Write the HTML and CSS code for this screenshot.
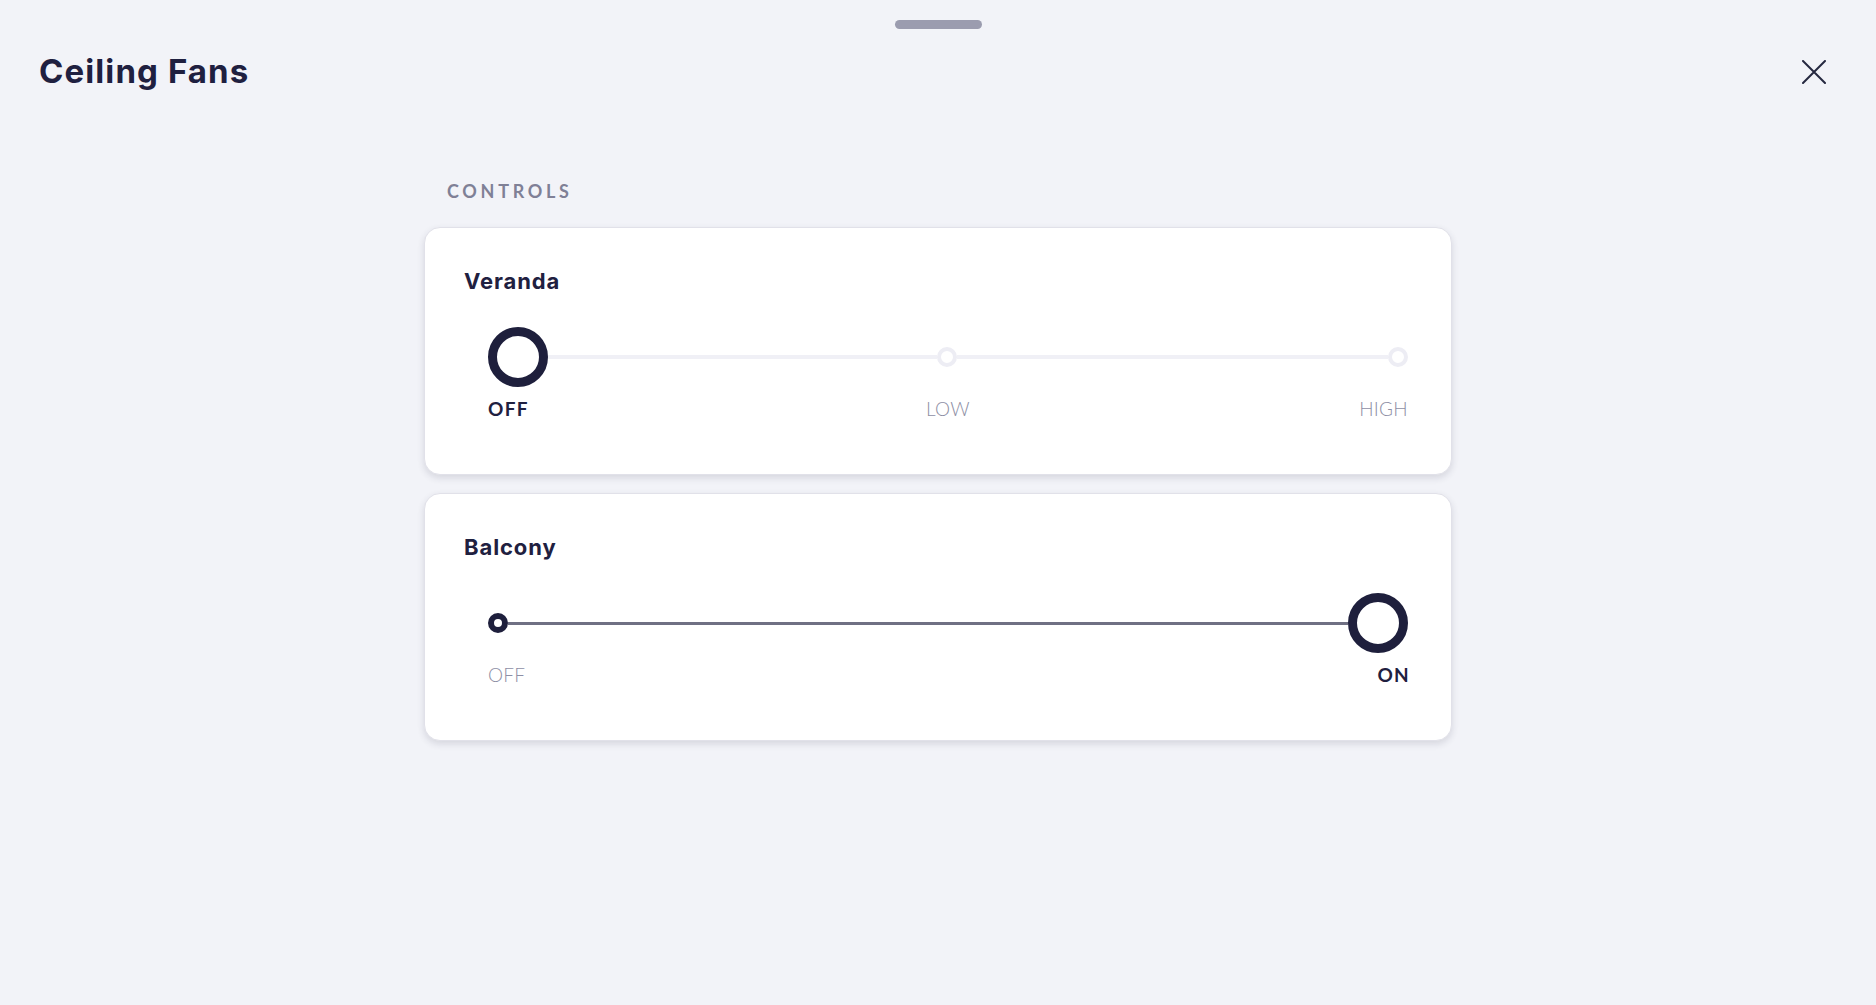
FILE: index.html
```html
<!DOCTYPE html>
<html lang="en">
<head>
<meta charset="utf-8">
<title>Ceiling Fans</title>
<link rel="stylesheet" href="styles.css">
</head>
<body>
  <div class="handle"></div>
  <header class="header">
    <h1 class="title">Ceiling Fans</h1>
    <button class="close" aria-label="Close">
      <svg width="24" height="24" viewBox="0 0 24 24" fill="none" stroke="#262840" stroke-width="2" stroke-linecap="round">
        <path d="M1 1 L23 23 M23 1 L1 23"/>
      </svg>
    </button>
  </header>

  <main class="content">
    <div class="section-label">CONTROLS</div>

    <section class="card">
      <h2 class="card-title">Veranda</h2>
      <div class="slider">
        <span class="knob big"></span>
        <span class="track light grow-a"></span>
        <span class="dot"></span>
        <span class="track light grow-b"></span>
        <span class="dot"></span>
      </div>
      <div class="labels three">
        <span class="lbl active start">OFF</span>
        <span class="lbl mid">LOW</span>
        <span class="lbl end">HIGH</span>
      </div>
    </section>

    <section class="card">
      <h2 class="card-title">Balcony</h2>
      <div class="slider">
        <span class="knob small"></span>
        <span class="track dark fill"></span>
        <span class="knob big"></span>
      </div>
      <div class="labels two">
        <span class="lbl">OFF</span>
        <span class="lbl active">ON</span>
      </div>
    </section>
  </main>
</body>
</html>
```

FILE: styles.css
```css
* { box-sizing: border-box; }

html, body {
  margin: 0;
  padding: 0;
  background: #f2f3f8;
  font-family: Lato, "Noto Sans", sans-serif;
  color: #1f2040;
}

body {
  width: 1876px;
  height: 1005px;
  overflow: hidden;
  padding-top: 20px;
}

.handle {
  width: 87px;
  height: 9px;
  margin: 0 auto;
  border-radius: 5px;
  background: #9b9caf;
}

.header {
  display: flex;
  align-items: center;
  justify-content: space-between;
  margin-top: 22px;
  padding: 0 50px 0 39px;
  height: 40px;
}

.title {
  margin: 0;
  font-family: Inter, Lato, sans-serif;
  font-size: 33px;
  line-height: 40px;
  font-weight: 700;
  letter-spacing: 1.1px;
  color: #1f2040;
}

.close {
  display: flex;
  padding: 0;
  margin-top: 2px;
  border: 0;
  background: transparent;
  cursor: pointer;
}

.content {
  width: 1028px;
  margin: 90px auto 0;
}

.section-label {
  padding-left: 23px;
  font-size: 18px;
  line-height: 20px;
  font-weight: 700;
  letter-spacing: 3.7px;
  color: #7f8096;
  margin-bottom: 26px;
}

.card {
  background: #ffffff;
  border: 1px solid #e1e1e9;
  border-radius: 16px;
  box-shadow: 0 3px 7px rgba(40, 40, 70, 0.14);
  padding: 39px 43px 54px 39px;
  margin-bottom: 18px;
}

.card-title {
  margin: 0;
  font-family: Inter, Lato, sans-serif;
  font-size: 22px;
  line-height: 28px;
  font-weight: 700;
  letter-spacing: 0.9px;
  color: #1f2040;
}

.slider {
  display: flex;
  align-items: center;
  height: 60px;
  margin: 32px 0 0 24px;
}

.knob {
  flex: none;
  border-radius: 50%;
  background: #fff;
  border: solid #1e1f3c;
}

.knob.big {
  width: 60px;
  height: 60px;
  border-width: 9px;
}

.knob.small {
  width: 20px;
  height: 20px;
  border-width: 6px;
}

.dot {
  flex: none;
  width: 20px;
  height: 20px;
  border-radius: 50%;
  border: 4px solid #ededf4;
  background: #fff;
}

.track {
  height: 4px;
}

.track.light { background: #f0f0f6; }
.track.dark { background: #6f7083; height: 3px; }

.grow-a { flex: 389 1 0; }
.grow-b { flex: 431 1 0; }
.fill { flex: 1 1 0; }

.labels {
  margin: 11px 0 0 24px;
  font-size: 19px;
  line-height: 22px;
}

.labels.three {
  display: grid;
  grid-template-columns: 1fr auto 1fr;
}

.labels.two {
  display: flex;
  justify-content: space-between;
  margin-right: -2px;
}

.lbl {
  font-weight: 300;
  color: #8e8fa5;
  letter-spacing: 0.3px;
}

.lbl.active {
  font-weight: 700;
  color: #1f2040;
  letter-spacing: 1.3px;
}

.start { justify-self: start; }
.mid { justify-self: center; }
.end { justify-self: end; }
```
